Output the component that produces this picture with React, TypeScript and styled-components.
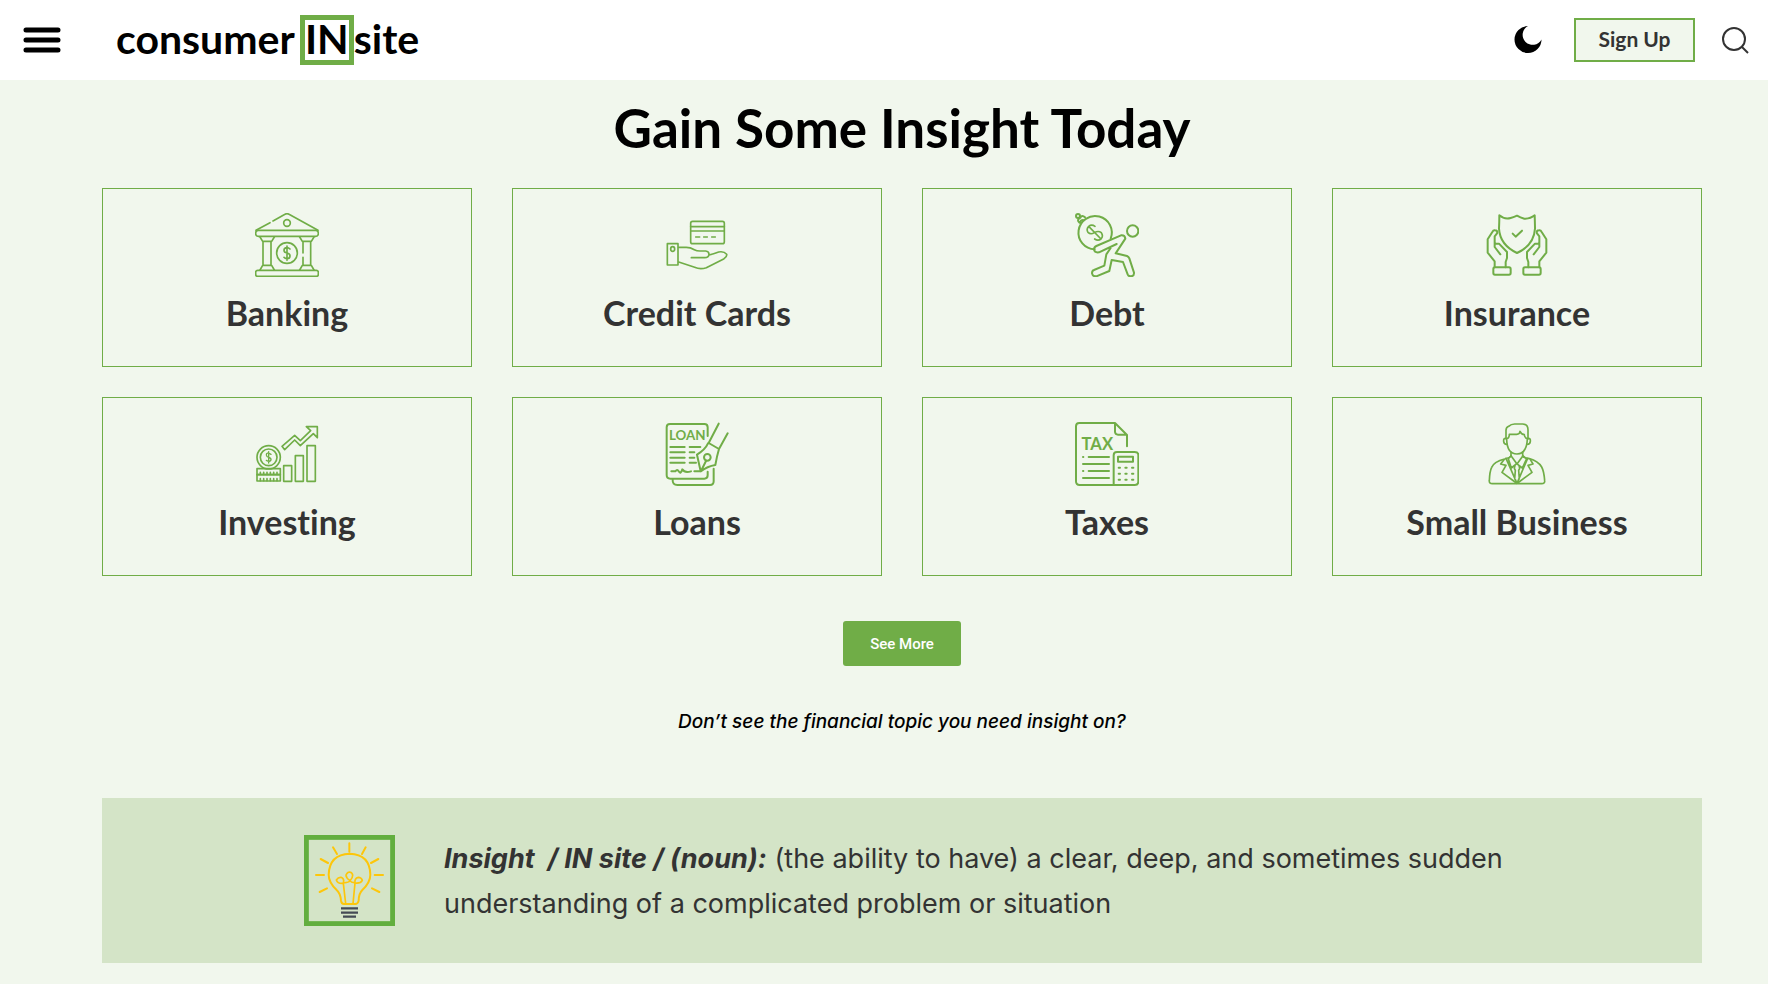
import React from "react";
import styled, { createGlobalStyle } from "styled-components";

const green = "#70ad47";
const ink = "#333333";
const pale = "#f1f7ed";

const GlobalStyle = createGlobalStyle`
  *, *::before, *::after { box-sizing: border-box; }
  body {
    margin: 0;
    background: ${pale};
    color: ${ink};
    font-family: "Inter", "Liberation Sans", sans-serif;
    font-variant-ligatures: none;
  }
  button { font: inherit; cursor: pointer; }
`;

const Header = styled.header`
  display: flex;
  align-items: center;
  height: 80px;
  padding: 0 19px 0 22px;
  background: #fff;
`;

const IconButton = styled.button`
  display: flex;
  padding: 0;
  border: 0;
  background: none;
`;

const Logo = styled.a`
  display: flex;
  align-items: center;
  margin-left: 54px;
  color: #000;
  font: 700 41px/40px "Lato", sans-serif;
  text-decoration: none;
`;

const LogoText = styled.span`
  padding-bottom: 2px;
`;

const LogoBox = styled.span`
  display: flex;
  align-items: center;
  justify-content: center;
  width: 54px;
  height: 50px;
  margin-left: 5px;
  padding-bottom: 2px;
  border: 5px solid ${green};
`;

const Tools = styled.div`
  display: flex;
  align-items: center;
  margin-left: auto;
`;

const SignUp = styled.button`
  width: 121px;
  height: 44px;
  margin: 0 26px 0 32px;
  padding: 0 0 2px;
  border: 2px solid ${green};
  background: ${pale};
  color: ${ink};
  && { font: 700 21px/24px "Lato", sans-serif; }
`;

const Main = styled.main`
  display: flex;
  flex-direction: column;
  align-items: center;
  padding: 16px 66px 21px 102px;
`;

const Title = styled.h1`
  margin: 0;
  color: #000;
  font: 700 53px/64px "Lato", sans-serif;
  font-variant-ligatures: none;
`;

const Topics = styled.nav`
  display: grid;
  grid-template-columns: repeat(4, 1fr);
  gap: 30px 40px;
  width: 100%;
  margin-top: 28px;
`;

const TopicCard = styled.a`
  display: flex;
  flex-direction: column;
  align-items: center;
  height: 179px;
  padding-top: 24px;
  border: 1px solid ${green};
  color: ${ink};
  text-decoration: none;
`;

const TopicIcon = styled.svg`
  width: 64px;
  height: 64px;
  fill: none;
  stroke: ${green};
  stroke-width: 6px;
  stroke-linecap: round;
  stroke-linejoin: round;
  text {
    fill: ${green};
    stroke: none;
    font-family: "Lato", sans-serif;
    font-weight: 700;
    text-anchor: middle;
  }
`;

const TopicName = styled.h2`
  margin: 16px 0 0;
  font: 700 34px/40px "Lato", sans-serif;
  font-variant-ligatures: none;
`;

const SeeMore = styled.button`
  height: 45px;
  margin-top: 45px;
  padding: 0 27px;
  border: 0;
  border-radius: 3px;
  background: ${green};
  color: #fff;
  && { font: 500 15px/20px "Roboto", sans-serif; }
`;

const Prompt = styled.p`
  margin: 40px 0 0;
  color: #000;
  font: italic 500 19px/32px "Inter", sans-serif;
`;

const Definition = styled.section`
  display: flex;
  align-items: center;
  width: 100%;
  min-height: 165px;
  margin-top: 60px;
  padding: 0 180px 0 202px;
  background: #d4e4c7;
`;

const Bulb = styled.svg`
  flex: none;
  width: 91px;
  height: 91px;
  fill: none;
  stroke: #fdc60b;
  stroke-width: 6px;
  stroke-linecap: round;
  stroke-linejoin: round;
`;

const DefinitionText = styled.p`
  margin: 0 0 0 49px;
  font-size: 27px;
  line-height: 45px;
`;

const Term = styled.strong`
  font-style: italic;
  white-space: pre-wrap;
`;

const Hand = () => (
  <>
    <path d="M121 163 L104 141 V109 L111 100 Q114 91 105 91 Q100 90 97 96 L83 118 V158 L104 184 V202 M107 131 H117 L141 156 V174 L137 186 V202" />
    <rect x="100" y="202" width="52" height="22" rx="5" />
  </>
);

type Topic = { name: string; viewBox: string; art: React.ReactNode };

const topics: Topic[] = [
  {
    name: "Banking",
    viewBox: "495 99 192 192",
    art: (
      <g strokeWidth="5">
        <path d="M540 128 L498 151 M549 123 L585 103 Q591 99 597 103 L684 151" />
        <circle cx="591" cy="129" r="10" />
        <rect x="497" y="151" width="188" height="18" rx="8" />
        <rect x="497" y="271" width="188" height="18" rx="6" />
        <path d="M510 171 L518 184 H545 L553 171 M519 184 V255 M543 184 V255 M510 270 L518 256 H545 L553 270" />
        <path d="M629 171 L637 184 H664 L672 171 M639 184 V219 M639 232 V255 M662 184 V255 M629 270 L637 256 H664 L672 270" />
        <circle cx="591" cy="219" r="31" />
        <path d="M600 207 Q596 203 591 203 Q582 203 582 211 Q582 218 591 219 Q600 220 600 228 Q600 236 591 236 Q585 236 582 232 M591 198 V241" />
      </g>
    ),
  },
  {
    name: "Credit Cards",
    viewBox: "75 39 192 192",
    art: (
      <g strokeWidth="5">
        <rect x="152" y="64" width="101" height="67" rx="6" />
        <path d="M152 80 H253 M152 93 H253 M167 111 H179 M191 111 H202 M215 111 H226" />
        <path d="M82 131 H114 V195 H82 Z" />
        <ellipse cx="98" cy="147" rx="6" ry="7" />
        <path d="M116 142 H139 Q151 142 163 149 Q170 153 180 153 H197 Q207 154 207 163 Q206 173 194 173 H154 M207 165 Q220 162 236 156 Q252 153 260 163 Q262 170 251 177 L199 203 Q181 209 164 202 L116 186" />
      </g>
    ),
  },
  {
    name: "Debt",
    viewBox: "75 39 192 192",
    art: (
      <g>
        <path d="M134 148 A50 50 0 1 1 182 116" />
        <circle cx="84" cy="48" r="6" />
        <path d="M88 68 Q80 60 88 55 M91 53 Q96 44 105 52 M90 68 Q92 60 99 60" />
        <path d="M135 79 Q125 72 116 79 Q108 88 114 97 Q122 105 133 98 Q145 91 154 98 Q161 108 153 117 Q144 124 134 117 M116 79 L153 117" strokeWidth="5" />
        <circle cx="248" cy="93" r="17" />
        <path d="M200 132 L147 157 Q134 159 132 149 Q132 141 139 138 L213 106 Q225 105 226 116 L197 160 L231 168 Q236 170 238 175 L252 218 Q253 227 244 229 Q236 230 233 223 L219 186 L185 180 L178 213 L139 229 Q128 230 126 220 Q126 212 132 210 L163 197 L169 163 L182 144" />
      </g>
    ),
  },
  {
    name: "Insurance",
    viewBox: "75 39 192 192",
    art: (
      <g>
        <path d="M118 46 Q133 59 152 54 Q163 51 171 47 Q181 53 193 56 Q211 57 224 46 Q225 76 225 86 Q222 136 171 159 Q120 135 117 86 Q118 68 118 46 Z" />
        <path d="M158 101 L167 110 L186 92" />
        <Hand />
        <g transform="translate(342 0) scale(-1 1)">
          <Hand />
        </g>
      </g>
    ),
  },
  {
    name: "Investing",
    viewBox: "45 36 192 192",
    art: (
      <g strokeWidth="5">
        <path d="M126 109 L164 76 L181 92 L212 62 L199 50 H232 V83 L220 71 L181 107 L164 90 L134 119 Z" />
        <circle cx="86" cy="142" r="35" />
        <circle cx="86" cy="142" r="25" />
        <path d="M93 133 Q79 125 79 135 Q80 141 86 142 Q94 144 93 150 Q90 157 79 151 M86 125 V159" strokeWidth="4" />
        <rect x="51" y="176" width="70" height="18" />
        <rect x="51" y="194" width="70" height="19" />
        <path d="M61 187 V193 M71 187 V193 M81 187 V193 M91 187 V193 M101 187 V193 M111 187 V193 M61 206 V212 M71 206 V212 M81 206 V212 M91 206 V212 M101 206 V212 M111 206 V212" />
        <path d="M131 167 H155 V214 H131 Z M166 137 H190 V214 H166 Z M201 107 H226 V214 H201 Z" />
      </g>
    ),
  },
  {
    name: "Loans",
    viewBox: "75 36 192 192",
    art: (
      <g>
        <path d="M203 78 V52 Q203 42 193 42 H90 Q80 42 80 52 V195 Q80 206 91 206 H193 Q203 206 203 196 V185 M98 209 Q97 225 112 225 H210 Q221 225 221 214 V176" />
        <text x="142" y="90" fontSize="40">LOAN</text>
        <path d="M91 111 H134 M149 111 H181 M91 127 H134 M149 127 H163 M91 143 H134 M149 143 H163 M91 158 H134 M149 158 H168 M94 184 H106 Q112 176 116 184 Q122 194 127 178 Q134 190 153 184 M163 184 H181" />
        <path d="M236 41 L206 99 L237 117 L263 70 M204 100 Q196 118 171 134 L182 184 Q202 169 226 165 Q231 137 237 117 M183 183 L198 153" />
        <circle cx="202" cy="142" r="10" />
      </g>
    ),
  },
  {
    name: "Taxes",
    viewBox: "75 36 192 192",
    art: (
      <g>
        <path d="M231 109 V75 L195 39 H88 Q78 39 78 49 V214 Q78 225 89 225 H254 Q265 225 265 214 V136 Q265 126 254 126 H201 Q191 126 191 136 V224 M195 40 V66 Q196 74 204 74 H230" />
        <text x="142" y="119" fontSize="50">TAX</text>
        <path d="M99 141 H100 M116 141 H177 M99 162 H177 M99 183 H100 M116 183 H177 M99 204 H177 M204 140 H249 V155 H204 Z" />
        <path d="M206 173 H210 M226 173 H230 M246 173 H250 M206 191 H210 M226 191 H230 M246 191 H250 M206 209 H210 M226 209 H230 M246 209 H250" />
      </g>
    ),
  },
  {
    name: "Small Business",
    viewBox: "75 36 192 192",
    art: (
      <g strokeWidth="5">
        <path d="M138 86 V61 Q138 52 146 49 Q153 42 164 42 H188 Q204 43 204 59 V86 M140 86 Q148 85 148 73 H170 Q180 73 180 64 Q184 73 193 74 Q193 83 204 87 M140 88 Q141 132 171 132 Q200 131 202 88" />
        <path d="M137 85 Q130 85 131 94 Q132 103 140 103 M205 85 Q212 85 211 94 Q210 103 202 103 M153 126 V138 Q151 142 134 147 Q102 155 95 172 Q89 184 88 212 Q87 221 97 221 H245 Q255 221 254 212 Q252 184 245 171 Q234 153 208 146 Q189 143 188 138 V126" />
        <path d="M153 137 L171 162 L189 137 M153 138 L145 146 L154 174 L170 161 L187 174 L200 146 L189 138 M138 145 L171 220 L203 145 M165 166 L163 175 L166 181 L164 207 M177 166 L179 175 L176 181 L178 207 M132 149 L122 162 L138 166 L126 187 L169 219 M211 149 L219 162 L204 166 L216 187 L173 219" />
      </g>
    ),
  },
];

export default function App() {
  return (
    <>
      <GlobalStyle />
      <Header>
        <IconButton aria-label="Open menu">
          <svg width="40" height="30" viewBox="0 0 40 30" stroke="#000" strokeWidth="5" strokeLinecap="round">
            <path d="M4 5 H36 M4 15 H36 M4 25 H36" />
          </svg>
        </IconButton>
        <Logo href="#">
          <LogoText>consumer</LogoText>
          <LogoBox>IN</LogoBox>
          <LogoText>site</LogoText>
        </Logo>
        <Tools>
          <IconButton aria-label="Dark mode">
            <svg width="28" height="28" viewBox="0 0 28 28">
              <path d="M14 0 A13.500 13.500 0 1 0 27.500 13.500 A10 10 0 1 1 14 0 Z" fill="#000" />
            </svg>
          </IconButton>
          <SignUp>Sign Up</SignUp>
          <IconButton aria-label="Search">
            <svg width="28" height="28" viewBox="0 0 28 28" fill="none" stroke={ink} strokeWidth="2">
              <circle cx="13" cy="13" r="11" />
              <path d="M20.500 20.500 L27 27" />
            </svg>
          </IconButton>
        </Tools>
      </Header>
      <Main>
        <Title>Gain Some Insight Today</Title>
        <Topics aria-label="Financial topics">
          {topics.map((t) => (
            <TopicCard href="#" key={t.name}>
              <TopicIcon viewBox={t.viewBox} aria-hidden="true">{t.art}</TopicIcon>
              <TopicName>{t.name}</TopicName>
            </TopicCard>
          ))}
        </Topics>
        <SeeMore>See More</SeeMore>
        <Prompt>Don’t see the financial topic you need insight on?</Prompt>
        <Definition>
          <Bulb viewBox="42 135 273 273" aria-hidden="true">
            <rect x="49" y="142" width="259" height="259" stroke="#62ae3e" strokeWidth="15" strokeLinejoin="miter" />
            <path d="M178 160 V185 M129 172 L141 192 M227 172 L216 192 M92 207 L114 219 M265 207 L243 219 M78 255 H102 M254 255 H279 M89 306 L111 295 M246 295 L268 306" />
            <path d="M162 342 Q154 342 153 332 Q152 311 140 300 Q116 277 116 254 Q118 193 179 191 Q240 193 241 254 Q241 277 217 300 Q206 311 206 332 Q204 342 196 342 Z" />
            <path d="M167 341 L160 280 Q143 282 139 270 Q145 261 153 262 Q164 266 160 279 Q180 276 180 272 Q168 264 168 255 Q172 246 179 246 Q188 248 188 256 Q188 265 180 272 Q184 279 195 278 Q193 265 205 262 Q214 262 217 271 Q212 281 195 279 L189 341" strokeWidth="5" />
            <path d="M153 355 H204 M153 368 H204 M159 380 H198" stroke="#444a55" strokeWidth="7" strokeLinecap="butt" />
          </Bulb>
          <DefinitionText>
            <Term>{"Insight  / IN site / (noun):"}</Term> (the ability to have) a clear, deep, and sometimes sudden
            understanding of a complicated problem or situation
          </DefinitionText>
        </Definition>
      </Main>
    </>
  );
}
